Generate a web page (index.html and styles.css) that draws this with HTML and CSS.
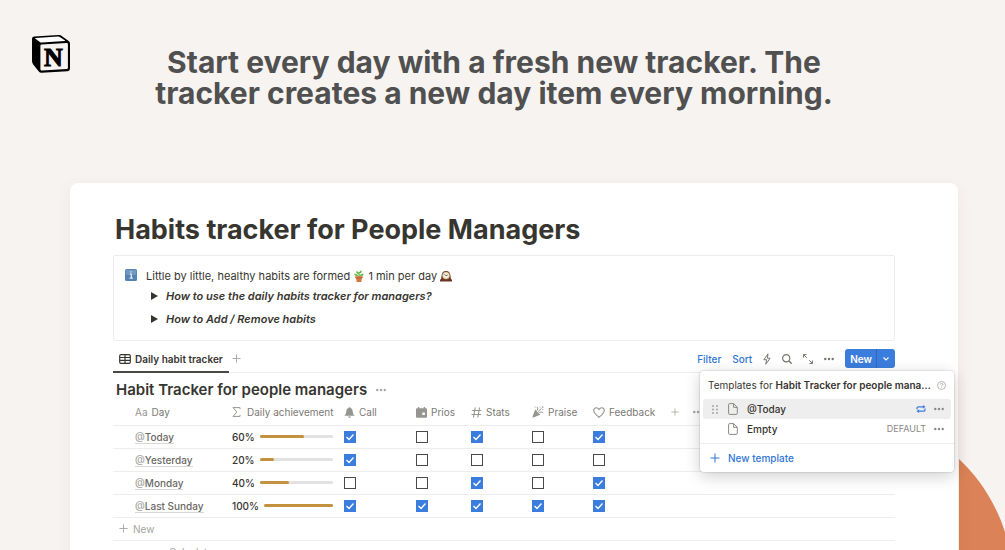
FILE: index.html
```html
<!DOCTYPE html>
<html lang="en">

<head>
    <title>Habits tracker for People Managers</title>
    <meta charset="UTF-8" />
    <meta name="viewport" content="width=device-width, initial-scale=1.0" />
    <link rel="stylesheet" href="styles.css">
</head>

<body>
    <!-- shared icons -->
    <svg class="sprite" aria-hidden="true">
        <symbol id="plus" viewBox="0 0 10 10"><path d="M5 .5v9M.5 5h9" fill="none" stroke="currentColor" /></symbol>
        <symbol id="dots" viewBox="0 0 10 4"><g fill="currentColor"><circle cx="1.3" cy="2" r="1.2" /><circle cx="5" cy="2" r="1.2" /><circle cx="8.7" cy="2" r="1.2" /></g></symbol>
        <symbol id="page" viewBox="0 0 10 12"><path d="M1.6.6h4L9.3 4.3v6.1a1 1 0 0 1-1 1H1.6a1 1 0 0 1-1-1V1.6a1 1 0 0 1 1-1zM5.6.6v3.7h3.7" fill="none" stroke="currentColor" /></symbol>
    </svg>

    <header class="hero">
        <svg class="logo" viewBox="0 0 38 38" role="img" aria-label="Notion">
            <path d="M2 1.6 26.5 0q1.800-.1 3.200.9l7 5q1.300.9 1.300 2.600v25q0 2.500-2.500 2.700L9.600 37.800q-1.700.1-2.800-1.200L1.200 29.400Q0 27.800 0 26V3.700Q0 1.800 2 1.600z" />
            <path d="M3.500 2.900 26 1.500q1-.1 1.800.5l5.200 3.600q.5.400-.2.500L9.700 7.500q-1 .1-1.800-.5L3.200 3.500q-.5-.5.3-.6z" fill="#fff" />
            <path d="M9.600 9.500 34.600 8q1.300-.1 1.300 1.200v23.500q0 1.200-1.200 1.300L9.800 35.500q-1.400.1-1.400-1.300V10.800q0-1.200 1.200-1.300z" fill="#f7f3f0" />
            <text x="12" y="31" class="logo-letter">N</text>
        </svg>
        <p class="headline">Start every day with a fresh new tracker. The<br>tracker creates a new day item every morning.</p>
    </header>

    <svg class="blob" viewBox="0 0 46 91" preserveAspectRatio="none" aria-hidden="true"><path d="M0 0C19 18 36 42 46 73V91H0z" /></svg>

    <main class="sheet">
        <h1>Habits tracker for People Managers</h1>

        <section class="callout">
            <svg class="emoji" viewBox="0 0 12 12" aria-hidden="true">
                <rect width="12" height="12" rx="1.500" fill="#5683b2" />
                <rect x=".7" y=".7" width="10.600" height="5" rx="1" fill="#7199c0" />
                <path d="M4.800 5h1.500v4M4.500 9.100h3.400M5.400 2.900h1.300" fill="none" stroke="#fff" />
            </svg>
            <div class="callout-body">
                <p>Little by little, healthy habits are formed
                    <svg class="emoji inline" viewBox="0 0 12 12" role="img" aria-label="potted plant">
                        <path d="M6 7V2" stroke="#3f8f2c" />
                        <path d="M5.700 4Q3 4 3.200 1.200 6 1 5.700 4zM6.200 3.500Q6 .8 8.700.5 9 3.500 6.200 3.500zM5.500 6.300Q2 6.800 1 3.800 4.500 3 5.500 6.300zM6.500 6.200Q7 3 10.800 3.800 10 7 6.500 6.200z" fill="#65b741" />
                        <path d="M2.300 6.300h7.400v1.800H9L8.300 12H3.700L3 8.100h-.7z" fill="#d6773f" />
                        <path d="M2.300 7.800h7.400" stroke="#a9522b" stroke-width=".6" />
                    </svg>
                    1 min per day
                    <svg class="emoji inline" viewBox="0 0 12 12" role="img" aria-label="mantel clock">
                        <path d="M0 11.500V9.700q1.500-.6 1.500-3.500Q1.700 1 6 1t4.500 5.200q0 2.900 1.500 3.500v1.800z" fill="#6d3526" />
                        <circle cx="6" cy="5.600" r="3.500" fill="#f4ecd9" stroke="#c2a46c" stroke-width=".6" />
                        <path d="M6 5.800 4.300 4.300M6 5.800l1.800-1" stroke="#444" stroke-width=".7" />
                    </svg>
                </p>
                <details>
                    <summary>How to use the daily habits tracker for managers?</summary>
                </details>
                <details>
                    <summary>How to Add / Remove habits</summary>
                </details>
            </div>
        </section>

        <nav class="viewbar">
            <button class="tab" type="button">
                <svg width="12" height="10" viewBox="0 0 12 10" aria-hidden="true"><path d="M2 .7h8q1.300 0 1.300 1.300v6q0 1.300-1.300 1.300H2Q.7 9.300.7 8V2Q.7.7 2 .7zM.7 3.500h10.600M.7 6.400h10.600M6 .7v8.600" fill="none" stroke="currentColor" stroke-width="1.200" /></svg>
                Daily habit tracker
            </button>
            <button class="icon-button pale" type="button" aria-label="Add view"><svg width="9" height="9"><use href="#plus" /></svg></button>
            <div class="tools">
                <button class="link" type="button">Filter</button>
                <button class="link" type="button">Sort</button>
                <button class="icon-button" type="button" aria-label="Automations"><svg width="8" height="12" viewBox="0 0 8 12"><path d="M5 .8.900 6.700h2.700L2.800 11.200 7.100 5.200H4.400z" fill="none" stroke="currentColor" stroke-linejoin="round" /></svg></button>
                <button class="icon-button" type="button" aria-label="Search"><svg width="10" height="10" viewBox="0 0 10 10"><circle cx="4.200" cy="4.200" r="3.600" fill="none" stroke="currentColor" stroke-width="1.200" /><path d="m6.800 6.800 2.900 2.900" stroke="currentColor" stroke-width="1.300" /></svg></button>
                <button class="icon-button" type="button" aria-label="Expand"><svg width="10" height="10" viewBox="0 0 10 10"><path d="M.6 3.500V.6h2.900M.6.6l3.200 3.200M9.400 6.500v2.900H6.500M9.400 9.400 6.200 6.200" fill="none" stroke="currentColor" /></svg></button>
                <button class="icon-button" type="button" aria-label="More"><svg width="10" height="4"><use href="#dots" /></svg></button>
                <div class="new">
                    <button class="new-main" type="button">New</button>
                    <button class="new-arrow" type="button" aria-label="Choose template"><svg width="6" height="4" viewBox="0 0 6 4"><path d="m.5.5L3 3 5.500.5" fill="none" stroke="currentColor" stroke-width="1.200" /></svg></button>

                    <div class="menu">
                        <div class="menu-title">
                            <p>Templates for <b>Habit Tracker for people mana…</b></p>
                            <svg width="9" height="9" viewBox="0 0 9 9" aria-hidden="true"><circle cx="4.500" cy="4.500" r="4" fill="none" stroke="currentColor" stroke-width=".8" /><path d="M3.200 3.600q0-1.200 1.300-1.200t1.300 1.100q0 .6-.7 1-.6.3-.6.8M4.500 6v.8" fill="none" stroke="currentColor" stroke-width=".8" /></svg>
                        </div>
                        <div class="menu-item active">
                            <svg class="grip" width="6" height="9" viewBox="0 0 6 9" aria-hidden="true"><path d="M.3 1h1.400M4.300 1h1.400M.3 4.500h1.400M4.300 4.500h1.400M.3 8h1.400M4.300 8h1.400" stroke="currentColor" stroke-width="1.400" /></svg>
                            <svg width="10" height="12" aria-hidden="true"><use href="#page" /></svg>
                            <span class="menu-name">@Today</span>
                            <svg class="repeat" width="10" height="8" viewBox="0 0 10 8" role="img" aria-label="Repeats"><path d="M1 4.400V3.100q0-1.300 1.300-1.300h5.200M9 3.600v1.300q0 1.300-1.300 1.300H2.500" fill="none" stroke="currentColor" stroke-width="1.200" /><path d="m6.900-.1 2.600 1.900-2.600 1.900zM3.100 4.300.5 6.200l2.600 1.900z" fill="currentColor" /></svg>
                            <button class="icon-button" type="button" aria-label="Today options"><svg width="10" height="4"><use href="#dots" /></svg></button>
                        </div>
                        <div class="menu-item">
                            <span class="grip"></span>
                            <svg width="10" height="12" aria-hidden="true"><use href="#page" /></svg>
                            <span class="menu-name">Empty</span>
                            <span class="badge">DEFAULT</span>
                            <button class="icon-button" type="button" aria-label="Empty options"><svg width="10" height="4"><use href="#dots" /></svg></button>
                        </div>
                        <button class="menu-new" type="button"><svg width="10" height="10" aria-hidden="true"><use href="#plus" /></svg>New template</button>
                    </div>
                </div>
            </div>
        </nav>

        <div class="table-title">
            <h2>Habit Tracker for people managers</h2>
            <button class="icon-button pale" type="button" aria-label="Database options"><svg width="10" height="4"><use href="#dots" /></svg></button>
        </div>

        <table>
            <colgroup>
                <col class="col-day"><col class="col-done"><col class="col-call"><col class="col-prios"><col class="col-habit"><col class="col-habit"><col class="col-feedback"><col class="col-add"><col>
            </colgroup>
            <thead>
                <tr>
                    <th><span class="head"><span class="aa">Aa</span>Day</span></th>
                    <th><span class="head wide"><svg width="9" height="10" viewBox="0 0 9 10"><path d="M8 2.200V.6H1L4.800 5 1 9.400h7V7.800" fill="none" stroke="currentColor" /></svg>Daily achievement</span></th>
                    <th><span class="head"><svg width="11" height="11" viewBox="0 0 11 11"><path d="M5.500.3q1 0 1 .8 2.200.6 2.200 3.200 0 2.700 1.600 3.900v.6H.7v-.6q1.600-1.200 1.600-3.900 0-2.600 2.200-3.200 0-.8 1-.8zM4 9.500h3Q6.600 10.900 5.500 10.900T4 9.500z" fill="currentColor" /></svg>Call</span></th>
                    <th><span class="head"><svg width="11" height="11" viewBox="0 0 11 11"><path fill-rule="evenodd" d="M1.900 0h1.400v1.300h4.400V0h1.400v1.300h.9q1 0 1 1v7.500q0 1-1 1H1q-1 0-1-1V2.300q0-1 1-1h.9zM6.300 5.400v2.600h2.600V5.400z" fill="currentColor" /></svg>Prios</span></th>
                    <th><span class="head"><svg width="11" height="11" viewBox="0 0 11 11"><path d="M4.200.5 2.500 10.500M8.500.5 6.800 10.500M1 3.500h9.500M.5 7.500H10" fill="none" stroke="currentColor" stroke-width="1.100" /></svg>Stats</span></th>
                    <th><span class="head"><svg width="12" height="12" viewBox="0 0 12 12"><path d="M3.200 3.600 8.300 8.700 1.200 11.500q-1 .3-.7-.7z" fill="currentColor" /><path d="M5 4.600Q6.500 3 5.200.8M7.200 6.700q1.800-1.500 4 0M6.200 5.600l3.300-3.300M7.700 1h.8M10.400 3.500h.8M10 .8h1v1M2.700 1h.8" fill="none" stroke="currentColor" /></svg>Praise</span></th>
                    <th><span class="head"><svg width="12" height="11" viewBox="0 0 12 11"><path d="M6 10.200Q.7 6.400.7 3.600.7.8 3.300.8 5 .8 6 2.600 7 .8 8.700.8q2.600 0 2.600 2.800 0 2.800-5.300 6.600z" fill="none" stroke="currentColor" stroke-width="1.100" /></svg>Feedback</span></th>
                    <th><button class="icon-button pale" type="button" aria-label="Add property"><svg width="8" height="8"><use href="#plus" /></svg></button></th>
                    <th><button class="icon-button pale" type="button" aria-label="Properties"><svg width="10" height="4"><use href="#dots" /></svg></button></th>
                </tr>
            </thead>
            <tbody>
                <tr>
                    <td><a class="day" href="#"><span>@</span>Today</a></td>
                    <td><div class="done">60%<div class="bar"><div class="fill" style="width: 60%"></div></div></div></td>
                    <td><input type="checkbox" aria-label="Call, Today" checked></td>
                    <td><input type="checkbox" aria-label="Prios, Today"></td>
                    <td><input type="checkbox" aria-label="Stats, Today" checked></td>
                    <td><input type="checkbox" aria-label="Praise, Today"></td>
                    <td><input type="checkbox" aria-label="Feedback, Today" checked></td>
                    <td></td>
                    <td></td>
                </tr>
                <tr>
                    <td><a class="day" href="#"><span>@</span>Yesterday</a></td>
                    <td><div class="done">20%<div class="bar"><div class="fill" style="width: 20%"></div></div></div></td>
                    <td><input type="checkbox" aria-label="Call, Yesterday" checked></td>
                    <td><input type="checkbox" aria-label="Prios, Yesterday"></td>
                    <td><input type="checkbox" aria-label="Stats, Yesterday"></td>
                    <td><input type="checkbox" aria-label="Praise, Yesterday"></td>
                    <td><input type="checkbox" aria-label="Feedback, Yesterday"></td>
                    <td></td>
                    <td></td>
                </tr>
                <tr>
                    <td><a class="day" href="#"><span>@</span>Monday</a></td>
                    <td><div class="done">40%<div class="bar"><div class="fill" style="width: 40%"></div></div></div></td>
                    <td><input type="checkbox" aria-label="Call, Monday"></td>
                    <td><input type="checkbox" aria-label="Prios, Monday"></td>
                    <td><input type="checkbox" aria-label="Stats, Monday" checked></td>
                    <td><input type="checkbox" aria-label="Praise, Monday"></td>
                    <td><input type="checkbox" aria-label="Feedback, Monday" checked></td>
                    <td></td>
                    <td></td>
                </tr>
                <tr>
                    <td><a class="day" href="#"><span>@</span>Last Sunday</a></td>
                    <td><div class="done">100%<div class="bar"><div class="fill" style="width: 100%"></div></div></div></td>
                    <td><input type="checkbox" aria-label="Call, Last Sunday" checked></td>
                    <td><input type="checkbox" aria-label="Prios, Last Sunday" checked></td>
                    <td><input type="checkbox" aria-label="Stats, Last Sunday" checked></td>
                    <td><input type="checkbox" aria-label="Praise, Last Sunday" checked></td>
                    <td><input type="checkbox" aria-label="Feedback, Last Sunday" checked></td>
                    <td></td>
                    <td></td>
                </tr>
            </tbody>
        </table>
        <button class="new-row" type="button"><svg width="9" height="9" aria-hidden="true"><use href="#plus" /></svg>New</button>
        <button class="calculate" type="button">Calculate</button>
    </main>
</body>

</html>
```
FILE: styles.css
```css
* {
    box-sizing: border-box;
}

body {
    position: relative;
    height: 100vh;
    margin: 0;
    overflow: hidden;
    display: flex;
    flex-direction: column;
    background-color: #f7f3f0;
    color: #37352f;
    font: 10px/16px Inter, "Liberation Sans", sans-serif;
}

h1,
h2,
p {
    margin: 0;
}

button {
    display: flex;
    align-items: center;
    padding: 0;
    border: 0;
    background: none;
    color: inherit;
    font: inherit;
}

svg {
    display: block;
    flex: none;
}

.sprite {
    position: absolute;
    width: 0;
    height: 0;
}

/* hero */
.hero {
    flex: none;
    display: flex;
    height: 183px;
    padding: 35px 87px 0 32px;
}

.logo {
    width: 38px;
    height: 38px;
}

.logo-letter {
    font: bold 26px "Liberation Serif", serif;
    stroke: #000;
    stroke-width: 1px;
}

.headline {
    flex: 1;
    padding-top: 12px;
    color: #505050;
    font-size: 30px;
    font-weight: 700;
    line-height: 31px;
    text-align: center;
}

.blob {
    position: absolute;
    right: 0;
    bottom: 0;
    width: 46px;
    height: 91px;
    fill: #db8258;
}

/* sheet */
.sheet {
    position: relative;
    flex: 1 0 auto;
    margin: 0 47px 0 70px;
    padding: 28px 63px 0 43px;
    border-radius: 8px 8px 0 0;
    background-color: #fff;
    box-shadow: 0 4px 16px rgba(80, 50, 30, 0.06);
}

h1 {
    padding-left: 2px;
    font-size: 27px;
    font-weight: 700;
    line-height: 38px;
}

.callout {
    display: flex;
    gap: 9px;
    height: 86px;
    margin-top: 6px;
    padding: 10px 11px;
    border: 1px solid #ededec;
    border-radius: 2px;
    font-size: 11px;
    line-height: 20px;
}

.emoji {
    width: 12px;
    height: 12px;
    margin-top: 3px;
}

.emoji.inline {
    display: inline-block;
    margin: 0;
    vertical-align: -2px;
}

summary {
    display: flex;
    align-items: center;
    gap: 8px;
    padding-left: 5px;
    margin-bottom: 3px;
    font-style: italic;
    font-weight: 600;
    list-style: none;
}

summary::before {
    content: "";
    border-left: 7px solid #37352f;
    border-top: 4px solid transparent;
    border-bottom: 4px solid transparent;
}

/* view bar */
.viewbar {
    display: flex;
    align-items: center;
    height: 25px;
    margin-top: 7px;
    padding-bottom: 3px;
    border-bottom: 1px solid #ededec;
}

.tab {
    gap: 4px;
    height: 25px;
    margin-bottom: -4px;
    padding: 0 6px 2px;
    border-bottom: 2px solid #4b4945;
    font-weight: 600;
}

.icon-button {
    color: #777570;
}

.icon-button.pale {
    color: #a5a4a0;
}

.tab + .icon-button {
    margin-left: 3px;
}

.tools {
    display: flex;
    align-items: center;
    gap: 11px;
    margin-left: auto;
}

.link {
    color: #2f76d8;
    font-weight: 500;
}

.new {
    position: relative;
    display: flex;
    height: 19px;
    border-radius: 3px;
    background-color: #3b7ddd;
    color: #fff;
    font-weight: 600;
}

.new-main {
    padding: 0 4px 0 5px;
}

.new-arrow {
    padding: 0 6px;
    border-left: 1px solid #3069bb;
}

/* template menu */
.menu {
    position: absolute;
    top: 22px;
    right: -59px;
    z-index: 1;
    width: 254px;
    border-radius: 4px;
    background-color: #fff;
    box-shadow: 0 0 1px 1px rgba(15, 15, 15, 0.08), 0 4px 16px rgba(15, 15, 15, 0.2);
    color: #37352f;
    font-weight: 400;
}

.menu-title {
    display: flex;
    align-items: center;
    justify-content: space-between;
    padding: 6px 8px;
    color: #a5a4a0;
}

.menu-title p {
    color: #37352f;
    white-space: nowrap;
}

.menu-title b {
    font-weight: 600;
}

.menu-item {
    display: flex;
    align-items: center;
    height: 20px;
    margin: 0 3px;
    padding: 0 7px 0 9px;
    border-radius: 3px;
    color: #8a8884;
}

.menu-item.active {
    background-color: #eeeeee;
}

.grip {
    width: 6px;
    margin-right: 10px;
}

.menu-name {
    flex: 1;
    padding-left: 9px;
    color: #37352f;
    font-weight: 500;
}

.menu-item .icon-button {
    margin-left: 8px;
    color: #8a8884;
}

.repeat {
    overflow: visible;
    color: #3b7ddd;
}

.badge {
    font-size: 9px;
}

.menu-new {
    gap: 8px;
    width: 100%;
    height: 29px;
    margin-top: 4px;
    padding: 0 10px;
    border-top: 1px solid #ededec;
    color: #2f76d8;
    font-weight: 500;
}

/* table */
.table-title {
    display: flex;
    align-items: center;
    gap: 9px;
    padding: 7px 3px 0;
}

h2 {
    font-size: 15px;
    font-weight: 600;
    line-height: 20px;
}

table {
    width: 100%;
    border-collapse: collapse;
    table-layout: fixed;
}

.col-day {
    width: 119px;
}

.col-done {
    width: 112px;
}

.col-call {
    width: 72px;
}

.col-prios {
    width: 55px;
}

.col-habit {
    width: 61px;
}

.col-feedback {
    width: 78px;
}

.col-add {
    width: 22px;
}

th,
td {
    height: 23px;
    padding: 0;
    border-bottom: 1px solid #ededec;
    text-align: left;
    white-space: nowrap;
}

th {
    height: 25px;
    color: #7b7974;
    font-weight: 400;
}

th:first-child,
td:first-child {
    padding-left: 22px;
}

.head {
    display: flex;
    align-items: center;
    gap: 4px;
}

.head.wide {
    gap: 6px;
}

.head svg,
.aa {
    color: #969591;
}

.day {
    border-bottom: 1px solid #d8d7d5;
    color: #6b6964;
    font-weight: 500;
    text-decoration: none;
}

.day span {
    color: #a5a4a0;
}

.done {
    display: flex;
    align-items: center;
    gap: 5px;
    padding-right: 11px;
    font-weight: 500;
}

.bar {
    flex: 1;
    height: 3px;
    border-radius: 2px;
    background-color: #e3e2e0;
}

.fill {
    height: 3px;
    border-radius: 2px;
    background-color: #c4923f;
}

input[type="checkbox"] {
    display: block;
    appearance: none;
    width: 12px;
    height: 12px;
    margin: 0;
    border: 1px solid #4b4945;
    background-color: #fff;
}

input[type="checkbox"]:checked {
    border: 0;
    background: #3b7ddd url("data:image/svg+xml,%3Csvg xmlns='http://www.w3.org/2000/svg' viewBox='0 0 12 12'%3E%3Cpath d='m2.500 6 2.500 2.500 4.500-5' fill='none' stroke='white' stroke-width='1.300'/%3E%3C/svg%3E");
}

.new-row {
    gap: 5px;
    width: 100%;
    height: 23px;
    padding-left: 6px;
    border-bottom: 1px solid #ededec;
    color: #a5a4a0;
}

.calculate {
    height: 23px;
    margin-left: 56px;
    color: #a5a4a0;
}
```
